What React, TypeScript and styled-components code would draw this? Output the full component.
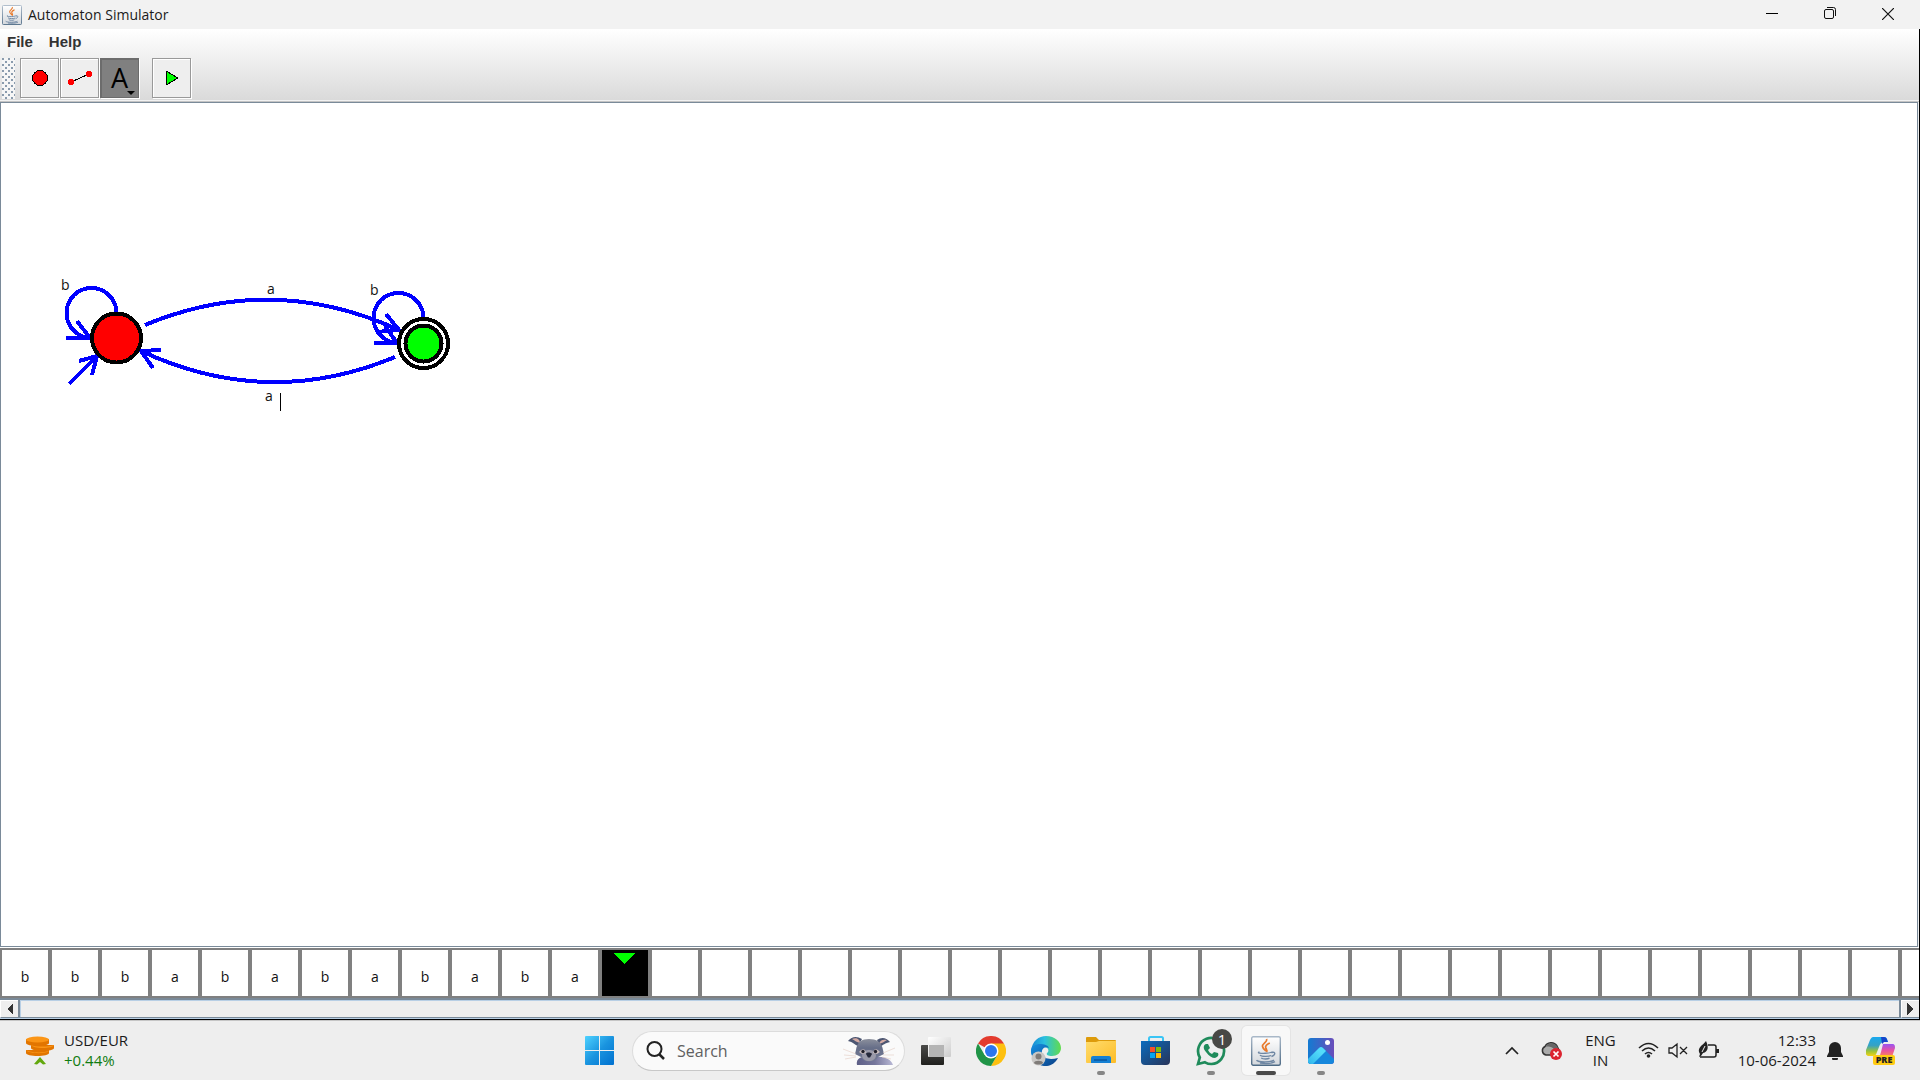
import React from "react";
import styled, { createGlobalStyle } from "styled-components";

const ui = `"Open Sans", "Noto Sans", sans-serif`;

const GlobalStyle = createGlobalStyle`
  * { box-sizing: border-box; }
  body { margin: 0; background: #eee; font-family: ${ui}; color: #1b1b1b; overflow: hidden; }
  button, input { font: inherit; color: inherit; }
  button { padding: 0; border: 0; background: none; display: flex; align-items: center; justify-content: center; }
  svg { display: block; flex: none; }
`;

const Screen = styled.div`
  height: 100vh;
  display: flex;
  flex-direction: column;
`;

/* ---------- window frame ---------- */

const TitleBar = styled.header`
  display: flex;
  align-items: center;
  height: 29px;
  padding: 0 3px 0 2px;
  background: #f2f2f2;
`;
const Title = styled.h1`
  flex: 1;
  margin: 0 0 0 6px;
  font-size: 14px;
  line-height: 20px;
  font-weight: 400;
`;
const CaptionButton = styled.button`
  width: 58px;
  height: 27px;
  align-self: flex-start;
`;

const WindowBody = styled.div`
  flex: 1;
  min-height: 0;
  display: flex;
  flex-direction: column;
  border-right: 1px solid #000;
  border-bottom: 1px solid #000;
`;

const Chrome = styled.div`
  height: 73px;
  background: linear-gradient(#fff, #dadada 71px, #f2f2f2 71px, #f2f2f2 72px, #c4c4c4 72px);
`;
const MenuBar = styled.nav`
  display: flex;
  gap: 16px;
  height: 28px;
  padding: 0 7px;
`;
const MenuButton = styled.button`
  height: 26px;
  color: #333;
  font: bold 15px/24px "Liberation Sans", Arial, sans-serif;
`;
const ToolBar = styled.div`
  display: flex;
  gap: 1px;
  height: 42px;
  padding: 1px 2px;
`;
const Grip = styled.div`
  width: 13px;
  height: 41px;
  margin-right: 4px;
  background:
    linear-gradient(#8a9bad, #8a9bad) 1px 1px / 1px 1px,
    radial-gradient(circle at 1px 1px, #8a9bad 1px, transparent 1px) 0 0 / 6px 6px,
    radial-gradient(circle at 1px 1px, #8a9bad 1px, transparent 1px) 3px 3px / 6px 6px,
    #f6f6f6;
  background-repeat: no-repeat, repeat, repeat, repeat;
`;
const ToolButton = styled.button<{ $active?: boolean }>`
  position: relative;
  width: 39px;
  height: 40px;
  border: 1px solid ${(p) => (p.$active ? "#6c6c6c" : "#999")};
  background: ${(p) => (p.$active ? "#808080" : "#eee")};
  box-shadow: inset 1px 1px ${(p) => (p.$active ? "#6c6c6c" : "#fff")}, 1px 1px #fff;
  font-size: 27px;
  font-weight: 500;
  line-height: 36px;
  color: #000;
`;
const ToolGap = styled.div`
  width: 11px;
`;
const DropMark = styled.svg`
  position: absolute;
  right: 3px;
  bottom: 2px;
`;

/* ---------- drawing canvas ---------- */

const CanvasFrame = styled.main`
  flex: 1;
  min-height: 0;
  margin-right: 1px;
  border: 1px solid #7a8a99;
  background: #fff;
  overflow: hidden;
`;
const Diagram = styled.svg`
  width: 100%;
  height: 100%;
  text {
    font: 14px ${ui};
    fill: #111;
  }
`;

/* ---------- tape ---------- */

const Tape = styled.div`
  display: flex;
  height: 51px;
  border-top: 1px solid #fff;
  overflow: hidden;
`;
const Cell = styled.div<{ $head?: boolean }>`
  flex: none;
  display: flex;
  justify-content: center;
  align-items: ${(p) => (p.$head ? "flex-start" : "center")};
  width: 50px;
  height: 50px;
  padding-top: ${(p) => (p.$head ? "3px" : "8px")};
  padding-right: ${(p) => (p.$head ? "1px" : "0")};
  border: 2px solid #808080;
  background: ${(p) => (p.$head ? "#000" : "#fff")};
  color: #111;
  font-size: 14px;
  line-height: 20px;
`;

const ScrollBar = styled.div`
  display: flex;
  height: 21px;
  border-top: 2px solid #7a8a99;
  border-bottom: 1px solid #b8cfe5;
`;
const ScrollButton = styled.button`
  width: 18px;
  border: solid #fff;
  border-width: 1px 0 1px 1px;
  border-bottom-color: #7a8a99;
  background: #eee;
`;
const ScrollThumb = styled.div`
  flex: 1;
  border: solid #7a8a99;
  border-width: 0 2px 1px;
  background: #eee;
  box-shadow: inset 1px 1px #b8cfe5;
`;

/* ---------- task bar ---------- */

const TaskBar = styled.footer`
  display: grid;
  grid-template-columns: 1fr auto 1fr;
  align-items: center;
  height: 60px;
  border-top: 1px solid #c6c6c6;
  background: #eee;
`;
const Widget = styled.button`
  justify-self: start;
  gap: 9px;
  margin-left: 25px;
`;
const Lines = styled.span<{ $align?: string }>`
  display: flex;
  flex-direction: column;
  padding-bottom: 2px;
  text-align: ${(p) => p.$align || "left"};
  font-size: 15px;
  line-height: 20px;
`;
const Gain = styled.span`
  color: #107c10;
`;
const Apps = styled.div`
  display: flex;
  align-items: center;
  gap: 7px;
`;
const TaskButton = styled.button<{ $active?: boolean }>`
  position: relative;
  width: 48px;
  height: 49px;
  border-radius: 5px;
  background: ${(p) => (p.$active ? "#f8f8f8" : "none")};
  box-shadow: ${(p) => (p.$active ? "0 0 0 1px #e4e4e4" : "none")};
`;
const Running = styled.span<{ $wide?: boolean }>`
  position: absolute;
  bottom: 0;
  left: 50%;
  transform: translateX(-50%);
  width: ${(p) => (p.$wide ? "20px" : "8px")};
  height: 4px;
  border-radius: 2px;
  background: ${(p) => (p.$wide ? "#4a4a4a" : "#868686")};
`;
const Badge = styled.span`
  position: absolute;
  top: 3px;
  right: 3px;
  width: 20px;
  height: 20px;
  border-radius: 50%;
  background: #484845;
  color: #fff;
  font-size: 15px;
  line-height: 20px;
`;
const SearchBox = styled.label`
  display: flex;
  align-items: center;
  width: 273px;
  height: 40px;
  margin-left: 2px;
  padding: 0 9px 0 13px;
  border: 1px solid #dcdcdc;
  border-bottom-color: #c8c8c8;
  border-radius: 20px;
  background: #fafafa;
`;
const SearchInput = styled.input`
  flex: 1;
  min-width: 0;
  margin-left: 12px;
  padding: 0;
  border: 0;
  outline: 0;
  background: none;
  font-size: 16px;
  line-height: 24px;
  &::placeholder { color: #606060; opacity: 1; }
`;
const Tray = styled.div`
  justify-self: end;
  display: flex;
  align-items: center;
  margin-right: 24px;
`;
const TrayButton = styled.button<{ $gap?: number }>`
  margin-left: ${(p) => p.$gap || 0}px;
`;

/* ---------- icons ---------- */

const JavaIcon = ({ size }: { size: number }) => (
  <svg width={size} height={size} viewBox="0 0 30 30">
    <defs>
      <linearGradient id="jf" x2="0" y2="1"><stop stopColor="#fff" /><stop offset="1" stopColor="#d3d7dc" /></linearGradient>
      <linearGradient id="jb" x2="0" y2="1"><stop stopColor="#a9b8c8" /><stop offset="1" stopColor="#4e6b86" /></linearGradient>
    </defs>
    <rect x=".7" y=".7" width="28.6" height="28.6" rx="1.500" fill="url(#jf)" stroke="url(#jb)" strokeWidth="1.400" />
    <path d="M15.500 3c1.500 3-4.500 4.500-4 7.500.3 2 2.500 3.500 3.500 4.500M18.800 7c-3 1.500-5 3-4 5 .8 1.500 1.800 2 .6 4" fill="none" stroke="#e8792b" strokeWidth="1.700" />
    <path d="M8.500 16c-3 .8 1 1.600 6 1.300 4 0 6-1 7-1.400M9 19.200c1 1.500 9 1.600 11 .3M10.200 22c2 1.400 6.500 1.200 8.300.2M21 16.500c3.500-1 4 2.200-.5 4M5.500 24.300c2 2.200 14.500 2.200 17.500-.2M9 27c5 .7 12 .4 15-1.300" fill="none" stroke="#6f87a3" strokeWidth="1.400" />
  </svg>
);

const Coins = () => (
  <svg width="30" height="30" viewBox="0 0 30 30">
    <g fill="#e27500">
      <path d="M1 14v3c0 4 23 4 23 0v-3z" /><path d="M6 9v3c0 4 23 4 23 0V9z" /><path d="M1 3v4c0 4 23 4 23 0V3z" />
    </g>
    <g fill="#fb9516"><ellipse cx="12.500" cy="3.500" rx="11.500" ry="3" /><path d="M6 9c4 2 18 2 23 0-1 4-21 4-23 0M1 14c4 3 18 3 23 1-2 3-21 3-23-1" /></g>
    <path d="M9 28l6-7 6 7-3 .5-3-2.500-3 2.500z" fill="#62a80d" />
  </svg>
);

const Start = () => (
  <svg width="29" height="29" viewBox="0 0 29 29">
    <defs><linearGradient id="win" x2="1" y2="1"><stop stopColor="#4ed2ff" /><stop offset=".5" stopColor="#1a94df" /><stop offset="1" stopColor="#0070cf" /></linearGradient></defs>
    <path d="M1 0h13v14H0V1a1 1 0 011-1zm14 0h13a1 1 0 011 1v13H15zM0 15h14v14H1a1 1 0 01-1-1zm15 0h14v13a1 1 0 01-1 1H15z" fill="url(#win)" />
  </svg>
);

const Binturong = () => (
  <svg width="52" height="30" viewBox="0 0 52 30">
    <defs>
      <linearGradient id="bh" x2="0" y2="1"><stop stopColor="#8b8f9c" /><stop offset=".4" stopColor="#666e88" /><stop offset="1" stopColor="#747a94" /></linearGradient>
      <linearGradient id="bb"><stop stopColor="#5d5f87" /><stop offset=".5" stopColor="#75769b" /><stop offset="1" stopColor="#b9b9d6" /></linearGradient>
    </defs>
    <path d="M14 29c-1-5 2-8 7-8h12c8-1 15 2 17 8z" fill="url(#bb)" />
    <path d="M5 5c4-5 9-5 14-2l-4 7C12 9 10 6 5 5zM47 6c-4-5-9-5-13-2l3 7c3-2 5-4 10-5z" fill="#4c5672" />
    <path d="M9 3c4-2 8 0 8 4-3-1-5-2-8-4zM44 4c-4-1-7 0-8 4 3-1 5-2 8-4z" fill="#d2aaa4" />
    <path d="M13 14c1-8 6-11 13-11s13 3 14 11l1 4-6 3c-3 6-14 6-17 0l-6-3z" fill="url(#bh)" />
    <path d="M19 19c1-4 4-5 7-5s6 1 7 5c0 8-14 8-14 0z" fill="#9a9aa9" />
    <path d="M24 18c0-2 5-2 6 0l-2 3.500h-2z" fill="#25283a" transform="translate(-1 0)" />
    <path d="M16 16q3-4 6-2l1 3-4 1zM37 16q-3-4-6-2l-1 3 4 1z" fill="#c9bdbd" />
    <circle cx="20" cy="15.500" r="1.700" fill="#20202b" /><circle cx="32.500" cy="15.500" r="1.700" fill="#20202b" />
    <path d="M0 13l13 5M1 19l12 1M2 23l11-2M52 12l-12 5M51 19H40M48 23l-9-2" stroke="#e6d2ca" strokeWidth=".7" />
  </svg>
);

const TaskView = () => (
  <svg width="30" height="30" viewBox="0 0 30 30">
    <defs>
      <linearGradient id="tv1" x2="0" y2="1"><stop stopColor="#4a4a48" /><stop offset="1" stopColor="#20201e" /></linearGradient>
      <linearGradient id="tv2" x2="1" y2="1"><stop stopColor="#fff" /><stop offset="1" stopColor="#ccc" /></linearGradient>
    </defs>
    <rect y="9" width="23" height="20" rx="1" fill="url(#tv1)" />
    <rect x="7" y="1" width="23" height="20" rx="1" fill="url(#tv2)" />
    <path d="M8 9h15v12H8z" fill="#b4b4b4" />
  </svg>
);

const ChromeLogo = () => (
  <svg width="30" height="30" viewBox="0 0 30 30">
    <path d="M15 15L2 7.500A15 15 0 0128 7.500z" fill="#e33b2e" />
    <path d="M15 7.500h13A15 15 0 0115 30l6.500-11.200z" fill="#fdc010" />
    <path d="M2 7.500A15 15 0 0015 30l6.500-11.200L15 15 8.500 18.800z" fill="#209447" />
    <circle cx="15" cy="15" r="7.500" fill="#fff" /><circle cx="15" cy="15" r="6" fill="#2c76ee" />
  </svg>
);

const EdgeLogo = () => (
  <svg width="30" height="30" viewBox="0 0 30 30">
    <defs>
      <linearGradient id="e1"><stop stopColor="#1686d4" /><stop offset=".45" stopColor="#2bbfe0" /><stop offset="1" stopColor="#62dc4c" /></linearGradient>
      <linearGradient id="e2" x2="1" y2="1"><stop stopColor="#1590e2" /><stop offset="1" stopColor="#0b3f86" /></linearGradient>
    </defs>
    <path d="M0 15C1 5 8 0 15 0c9 0 15 6 15 12 0 5-4 8-9 8-4 0-6-1-5-3 3-2 1-6-3-6-6 0-8 5-6 12C3 22 0 19 0 15z" fill="url(#e1)" />
    <path d="M0 15C0 10 5 8 9 8c4 0 8 1 9 4-4-2-8 1-7 5 1 6 8 7 16 5-5 10-17 10-22 4-3-3-5-7-5-11z" fill="url(#e2)" />
    <circle cx="7.500" cy="22.500" r="7" fill="#c9c7c5" /><circle cx="7.500" cy="20.500" r="3" fill="#7f7b78" />
    <path d="M3 27c0-3 9-3 9 0-2 2-7 2-9 0z" fill="#7f7b78" />
  </svg>
);

const Folder = () => (
  <svg width="30" height="27" viewBox="0 0 30 27">
    <defs><linearGradient id="fo" x2="1" y2="1"><stop stopColor="#ffdc6d" /><stop offset="1" stopColor="#fdbc26" /></linearGradient></defs>
    <path d="M0 8V1a1 1 0 011-1h9l3 3h16a1 1 0 011 1v4z" fill="#dd9b0b" />
    <path d="M0 5h10l3-1h17v21a1 1 0 01-1 1H1a1 1 0 01-1-1z" fill="url(#fo)" />
    <path d="M5 26v-5a2 2 0 012-2h16a2 2 0 012 2v5z" fill="#1580d3" /><path d="M8 23h13" stroke="#074b91" strokeWidth="1.200" />
  </svg>
);

const Store = () => (
  <svg width="30" height="30" viewBox="0 0 30 30">
    <defs><linearGradient id="st" x2="1" y2="1"><stop stopColor="#0a6cbe" /><stop offset="1" stopColor="#283459" /></linearGradient></defs>
    <path d="M8 6V2.500A1.500 1.500 0 019.500 1h11A1.500 1.500 0 0122 2.500V6" fill="none" stroke="#3ac5f5" strokeWidth="2" />
    <path d="M0 5h29v20a4 4 0 01-4 4H4a4 4 0 01-4-4z" fill="url(#st)" />
    <path d="M9 11h5v5H9z" fill="#f6502a" /><path d="M15 11h5v5h-5z" fill="#80bb08" /><path d="M9 17h5v5H9z" fill="#06a5f0" /><path d="M15 17h5v5h-5z" fill="#ffba08" />
  </svg>
);

const WhatsApp = () => (
  <svg width="30" height="30" viewBox="0 0 30 30">
    <path d="M2 28l1.800-6.500A13 13 0 1115.500 28a13 13 0 01-6.500-1.700z" fill="none" stroke="#1f8b5b" strokeWidth="2.700" />
    <path d="M10 8c-3 1-3 5 0 8 3 4 6 6 9 6 3-1 4-3 3-5l-4-1-2 2c-2-1-3-2-4-4l2-2-2-4z" fill="#1f8b5b" />
  </svg>
);

const Photos = () => (
  <svg width="26" height="26" viewBox="0 0 26 26">
    <defs>
      <linearGradient id="p1" x2="1"><stop stopColor="#137bd2" /><stop offset="1" stopColor="#6a4dba" /></linearGradient>
      <linearGradient id="p2" x1="0" y1="1" x2="1" y2="0"><stop stopColor="#2fb4ec" /><stop offset=".7" stopColor="#53dcfa" /></linearGradient>
      <clipPath id="pc"><rect width="26" height="26" rx="3" /></clipPath>
    </defs>
    <g clipPath="url(#pc)">
      <rect width="26" height="26" fill="url(#p1)" />
      <path d="M0 21l11-11q2-2 4 0l11 11v5H0z" fill="#1687dc" /><path d="M0 21l11-11q2-2 4 0l3 3L5 26H0z" fill="url(#p2)" />
      <circle cx="19.500" cy="4.500" r="2.500" fill="#fff" />
    </g>
  </svg>
);

const Copilot = () => (
  <svg width="30" height="29" viewBox="0 0 30 29">
    <defs>
      <linearGradient id="c1" x2="0" y2="1"><stop stopColor="#18a8ee" /><stop offset=".45" stopColor="#36a2c3" /><stop offset=".75" stopColor="#9cc33a" /><stop offset="1" stopColor="#f3d315" /></linearGradient>
      <linearGradient id="c2" x2="0" y2="1"><stop stopColor="#9854f2" /><stop offset=".5" stopColor="#e852a2" /><stop offset="1" stopColor="#fb8851" /></linearGradient>
    </defs>
    <path d="M7 1h11c2 0 3 1 4 5h-4c-3 0-4 2-5 5l-2 5c-1 3-2 4-4 4H3c-3 0-4-3-3-6L4 4c1-2 2-3 3-3z" fill="url(#c1)" />
    <path d="M15 1h3c3 0 3 3 4 5h-4l-2 2z" fill="#1646cb" />
    <path d="M17 8h9c3 0 3 2 3 4l-3 9H11c3 0 3-2 4-5z" fill="url(#c2)" />
    <rect x="7" y="19" width="22" height="10" rx="2" fill="#ffcb12" />
    <text x="18" y="27" textAnchor="middle" fontFamily="Open Sans, sans-serif" fontSize="9" fontWeight="800" fill="#222">PRE</text>
  </svg>
);

const tape = [..."bbbababababa"];
const cells = Array.from({ length: 39 }, (_, i) => tape[i] || "");
const apps = [
  { name: "Task view", icon: <TaskView /> },
  { name: "Google Chrome", icon: <ChromeLogo /> },
  { name: "Microsoft Edge", icon: <EdgeLogo /> },
  { name: "File Explorer", icon: <Folder />, running: true },
  { name: "Microsoft Store", icon: <Store /> },
  { name: "WhatsApp", icon: <WhatsApp />, running: true, badge: "1" },
  { name: "Automaton Simulator", icon: <JavaIcon size={30} />, running: true, active: true },
  { name: "Photos", icon: <Photos />, running: true },
];

export default function App() {
  return (
    <Screen>
      <GlobalStyle />
      <TitleBar>
        <JavaIcon size={20} />
        <Title>Automaton Simulator</Title>
        <CaptionButton aria-label="Minimize"><svg width="12" height="12"><path d="M0 5.500h12" stroke="#000" /></svg></CaptionButton>
        <CaptionButton aria-label="Restore">
          <svg width="13" height="13" fill="none" stroke="#111"><rect x=".5" y="2.500" width="9" height="9" rx="1.500" /><path d="M3 .5h6.500a2 2 0 012 2V9" /></svg>
        </CaptionButton>
        <CaptionButton aria-label="Close"><svg width="12" height="12"><path d="M0 0l12 12M12 0L0 12" stroke="#111" strokeWidth="1.200" /></svg></CaptionButton>
      </TitleBar>

      <WindowBody>
        <Chrome>
          <MenuBar><MenuButton>File</MenuButton><MenuButton>Help</MenuButton></MenuBar>
          <ToolBar>
            <Grip />
            <ToolButton aria-label="State tool">
              <svg width="16" height="16" shapeRendering="crispEdges"><circle cx="8" cy="8" r="7.500" fill="#f00" stroke="#000" /></svg>
            </ToolButton>
            <ToolButton aria-label="Transition tool">
              <svg width="24" height="14" shapeRendering="crispEdges"><path d="M3 11L21 3" stroke="#000" /><circle cx="3" cy="11" r="3" fill="#f00" /><circle cx="21" cy="3" r="3" fill="#f00" /></svg>
            </ToolButton>
            <ToolButton $active aria-label="Text tool">
              A
              <DropMark width="8" height="4"><path d="M0 0h8L4 4z" /></DropMark>
            </ToolButton>
            <ToolGap />
            <ToolButton aria-label="Run">
              <svg width="14" height="16" shapeRendering="crispEdges"><path d="M1 1v14l12-7z" fill="#0f0" stroke="#000" /></svg>
            </ToolButton>
          </ToolBar>
        </Chrome>

        <CanvasFrame>
          <Diagram>
            <g transform="translate(-1 -103)">
              <g fill="none" stroke="#00f" strokeWidth="4" shapeRendering="crispEdges">
                <path d="M116.500 313A25 25 0 1091.500 338M66 338H90L77 321" />
                <path d="M69 384L97 356M79 361L97 356L92 375" />
                <path d="M145 325Q272 272 399 330M386 314L399 330L377 332" />
                <path d="M395 357Q268 410 141 351M161 350L141 351L153 368" />
                <path d="M423.500 318A25 25 0 10398.500 343M374 343H397L385 326" />
              </g>
              <g stroke="#000" shapeRendering="crispEdges">
                <circle cx="116.500" cy="338" r="24.500" fill="#f00" strokeWidth="4" />
                <circle cx="423.500" cy="343.500" r="24.500" fill="#fff" strokeWidth="4" />
                <circle cx="423.500" cy="343.500" r="18" fill="#0f0" strokeWidth="4" />
                <path d="M280.500 393V411" />
              </g>
              <text x="61" y="290">b</text>
              <text x="267" y="294">a</text>
              <text x="370" y="295">b</text>
              <text x="265" y="401">a</text>
            </g>
          </Diagram>
        </CanvasFrame>

        <Tape>
          {cells.map((c, i) =>
            i === tape.length ? (
              <Cell key={i} $head><svg width="21" height="11" shapeRendering="crispEdges"><path d="M0 0h21L10.500 11z" fill="#0f0" /></svg></Cell>
            ) : (
              <Cell key={i}>{c}</Cell>
            )
          )}
        </Tape>
        <ScrollBar>
          <ScrollButton aria-label="Scroll left"><svg width="6" height="12" shapeRendering="crispEdges"><path d="M6 0v12L0 6z" fill="#333" /></svg></ScrollButton>
          <ScrollThumb />
          <ScrollButton aria-label="Scroll right"><svg width="8" height="12" shapeRendering="crispEdges"><path d="M0 0v12l6-6z" fill="#333" /></svg></ScrollButton>
        </ScrollBar>
      </WindowBody>

      <TaskBar>
        <Widget>
          <Coins />
          <Lines><span>USD/EUR</span><Gain>+0.44%</Gain></Lines>
        </Widget>
        <Apps>
          <TaskButton aria-label="Start"><Start /></TaskButton>
          <SearchBox>
            <svg width="19" height="19" fill="none" stroke="#222" strokeWidth="2"><circle cx="8.500" cy="8" r="7" /><path d="M13 13l5 5" strokeWidth="2.500" /></svg>
            <SearchInput type="text" placeholder="Search" aria-label="Search" />
            <Binturong />
          </SearchBox>
          {apps.map((a) => (
            <TaskButton key={a.name} aria-label={a.name} $active={a.active}>
              {a.icon}
              {a.badge && <Badge>{a.badge}</Badge>}
              {a.running && <Running $wide={a.active} />}
            </TaskButton>
          ))}
        </Apps>
        <Tray>
          <TrayButton aria-label="Show hidden icons"><svg width="14" height="9" fill="none" stroke="#222" strokeWidth="1.700"><path d="M1 8l6-6 6 6" /></svg></TrayButton>
          <TrayButton aria-label="OneDrive" $gap={22}>
            <svg width="22" height="20" viewBox="0 0 22 20">
              <path d="M5 14a4.500 4.500 0 01-1-8.500C6 1 13 0 16 5l2 4-7 5z" fill="#aaa" stroke="#333" strokeWidth="1.500" />
              <path d="M5 6c3-6 10-4 12 1l-4 1C11 6 8 5 5 6z" fill="#666" />
              <circle cx="15" cy="13" r="6" fill="#dc2430" /><path d="M12.500 10.500l5 5m0-5l-5 5" stroke="#fff" strokeWidth="1.700" />
            </svg>
          </TrayButton>
          <TrayButton $gap={22}><Lines $align="center"><span>ENG</span><span>IN</span></Lines></TrayButton>
          <TrayButton $gap={22} aria-label="Network, volume and battery">
            <svg width="82" height="20" viewBox="0 0 82 20" fill="none" stroke="#222" strokeWidth="1.600">
              <path d="M1 7q9.500-9 19 0M4 10q6.500-6 13 0M7 13q3.500-3 7 0" /><circle cx="10.500" cy="15" r="1.800" fill="#222" stroke="none" />
              <path d="M31 7h3l5-4v13l-5-4h-3zM42 6l7 7m0-7l-7 7" strokeWidth="1.300" />
              <path d="M70 4h6q2 0 2 2v8q0 2-2 2H62" strokeWidth="1.500" /><path d="M79.500 8v4" strokeWidth="3" />
              <path d="M61 11c-1-5 3-6 7-11 3 6 2 11-3 12l-2 3-2 1 1-3z" fill="#222" stroke="none" /><path d="M64 11l3-6" stroke="#eee" strokeWidth="1" />
            </svg>
          </TrayButton>
          <TrayButton $gap={18}><Lines $align="right"><span>12:33</span><span>10-06-2024</span></Lines></TrayButton>
          <TrayButton $gap={11} aria-label="Notifications">
            <svg width="16" height="19" viewBox="0 0 16 19"><path d="M0 15l2-4V7a6 6 0 0112 0v4l2 4v1H0zM5 17h6a3 3 0 01-6 0z" fill="#222" /></svg>
          </TrayButton>
          <TrayButton $gap={23} aria-label="Copilot"><Copilot /></TrayButton>
        </Tray>
      </TaskBar>
    </Screen>
  );
}
